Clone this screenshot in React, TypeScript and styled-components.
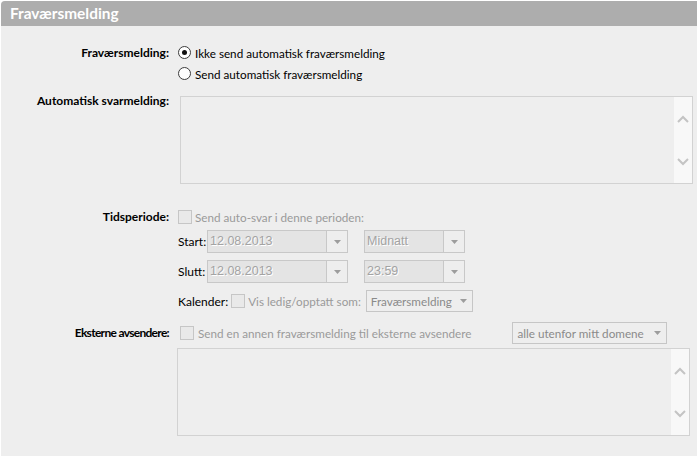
import React from 'react';
import styled, { createGlobalStyle } from 'styled-components';

const GlobalStyle = createGlobalStyle`
  html, body {
    margin: 0;
    padding: 0;
    background: #ffffff;
  }
  body {
    font-family: Lato, "Open Sans", sans-serif;
    font-size: 11.7px;
    color: #000;
  }
`;

const Panel = styled.div`
  margin: 1px 0 0 1px;
  width: 696px;
  height: 455px;
  background: #eeeeee;
  border-top-left-radius: 4px;
  overflow: hidden;
`;

const Header = styled.div`
  height: 25px;
  background: #adadad;
  color: #ffffff;
  font-weight: 700;
  font-size: 15.4px;
  line-height: 25px;
  padding-left: 9px;
`;

const Form = styled.div`
  display: grid;
  grid-template-columns: 168px 1fr;
  column-gap: 9px;
  padding-top: 16px;
`;

const Label = styled.div<{ $top?: number; $tight?: boolean }>`
  font-weight: 700;
  font-size: 12px;
  text-align: right;
  line-height: 21px;
  letter-spacing: ${(p) => (p.$tight ? '-0.7px' : 'normal')};
  margin-top: ${(p) => p.$top ?? 0}px;
`;

const Field = styled.div<{ $top?: number; $left?: number }>`
  margin-top: ${(p) => p.$top ?? 0}px;
  margin-left: ${(p) => p.$left ?? 0}px;
  display: flex;
  flex-direction: column;
`;

const RadioRow = styled.label`
  display: flex;
  align-items: center;
  height: 21px;
  gap: 4px;
`;

const RadioDot = styled.span<{ $checked?: boolean }>`
  width: 11px;
  height: 11px;
  border: 1px solid #3c3c3c;
  border-radius: 50%;
  background: #fff;
  display: flex;
  align-items: center;
  justify-content: center;
  &::after {
    content: '';
    width: 5px;
    height: 5px;
    border-radius: 50%;
    background: ${(p) => (p.$checked ? '#111' : 'transparent')};
  }
`;

const Box = styled.span`
  width: 12px;
  height: 12px;
  border: 1px solid #c6c6c6;
  background: #e9e9e9;
  flex-shrink: 0;
`;

const CheckRow = styled.div<{ $gap?: number }>`
  display: flex;
  align-items: center;
  height: 21px;
  gap: ${(p) => p.$gap ?? 3}px;
  color: #9a9a9a;
`;

const TextArea = styled.div<{ $width: number }>`
  width: ${(p) => p.$width}px;
  height: 86px;
  border: 1px solid #d2d2d2;
  display: flex;
  background: #eeeeee;
`;

const AreaBody = styled.div`
  flex: 1;
`;

const ScrollStrip = styled.div`
  width: 18px;
  background: #f8f8f8;
  display: flex;
  flex-direction: column;
  justify-content: space-between;
  align-items: center;
  padding: 18px 0 17px;
`;

const SubRow = styled.div<{ $top?: number }>`
  display: flex;
  align-items: center;
  margin-top: ${(p) => p.$top ?? 0}px;
`;

const SubLabel = styled.span<{ $width?: number }>`
  font-size: 12px;
  text-align: right;
  width: ${(p) => (p.$width ? `${p.$width}px` : 'auto')};
  margin-right: 3px;
`;

const Combo = styled.div<{ $width: number }>`
  width: ${(p) => p.$width}px;
  height: 23px;
  border: 1px solid #c8c8c8;
  display: flex;
  box-sizing: border-box;
`;

const ComboText = styled.div`
  flex: 1;
  background: #e4e4e4;
  color: #a3a3a3;
  font-family: "Liberation Sans", Arial, sans-serif;
  font-size: 12.5px;
  line-height: 21px;
  padding-left: 2px;
  text-shadow: 1px 1px 0 #ffffff;
`;

const ComboButton = styled.div`
  width: 20px;
  border-left: 1px solid #c8c8c8;
  background: #eeeeee;
  display: flex;
  align-items: center;
  justify-content: center;
`;

const Select = styled.div<{ $width: number }>`
  width: ${(p) => p.$width}px;
  height: 22px;
  box-sizing: border-box;
  border: 1px solid #c6c6c6;
  display: flex;
  align-items: center;
  justify-content: space-between;
  padding: 0 5px 0 4px;
  color: #8a8a8a;
`;

const Gap = styled.div<{ $w: number }>`
  width: ${(p) => p.$w}px;
  flex-shrink: 0;
`;

const Arrow = () => (
  <svg width="7" height="4" viewBox="0 0 7 4">
    <path d="M0 0h7L3.5 4z" fill="#9d9d9d" />
  </svg>
);

const Chevron = ({ up }: { up?: boolean }) => (
  <svg width="12" height="8" viewBox="0 0 12 8">
    <path
      d={up ? 'M1 7L6 2l5 5' : 'M1 1l5 5 5-5'}
      fill="none"
      stroke="#c4c4c4"
      strokeWidth="2"
    />
  </svg>
);

const Scrolled = ({ width }: { width: number }) => (
  <TextArea $width={width}>
    <AreaBody />
    <ScrollStrip>
      <Chevron up />
      <Chevron />
    </ScrollStrip>
  </TextArea>
);

const DateCombo = ({ value, width }: { value: string; width: number }) => (
  <Combo $width={width}>
    <ComboText>{value}</ComboText>
    <ComboButton>
      <Arrow />
    </ComboButton>
  </Combo>
);

export default function App() {
  return (
    <>
      <GlobalStyle />
      <Panel>
        <Header>Fraværsmelding</Header>
        <Form>
          <Label>Fraværsmelding:</Label>
          <Field>
            <RadioRow>
              <RadioDot $checked />
              Ikke send automatisk fraværsmelding
            </RadioRow>
            <RadioRow>
              <RadioDot />
              Send automatisk fraværsmelding
            </RadioRow>
          </Field>

          <Label $top={6}>Automatisk svarmelding:</Label>
          <Field $top={12} $left={2}>
            <Scrolled width={511} />
          </Field>

          <Label $top={22}>Tidsperiode:</Label>
          <Field $top={22}>
            <CheckRow>
              <Box />
              Send auto-svar i denne perioden:
            </CheckRow>
            <SubRow $top={3}>
              <SubLabel $width={26}>Start:</SubLabel>
              <DateCombo value="12.08.2013" width={141} />
              <Gap $w={16} />
              <DateCombo value="Midnatt" width={101} />
            </SubRow>
            <SubRow $top={7}>
              <SubLabel $width={26}>Slutt:</SubLabel>
              <DateCombo value="12.08.2013" width={141} />
              <Gap $w={16} />
              <DateCombo value="23:59" width={101} />
            </SubRow>
            <SubRow $top={7}>
              <SubLabel>Kalender:</SubLabel>
              <CheckRow>
                <Box />
                Vis ledig/opptatt som:
              </CheckRow>
              <Gap $w={5} />
              <Select $width={107}>
                Fraværsmelding
                <Arrow />
              </Select>
            </SubRow>
          </Field>

          <Label $top={10} $tight>Eksterne avsendere:</Label>
          <Field $top={10}>
            <SubRow>
              <Gap $w={2} />
              <CheckRow $gap={4}>
                <Box />
                Send en annen fraværsmelding til eksterne avsendere
              </CheckRow>
              <Gap $w={41} />
              <Select $width={155}>
                alle utenfor mitt domene
                <Arrow />
              </Select>
            </SubRow>
            <Field $top={4} $left={-1}>
              <Scrolled width={511} />
            </Field>
          </Field>
        </Form>
      </Panel>
    </>
  );
}
